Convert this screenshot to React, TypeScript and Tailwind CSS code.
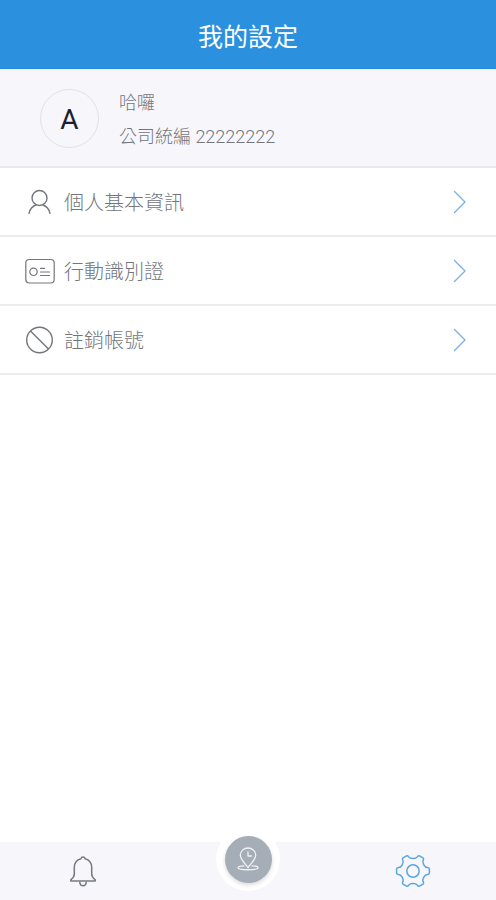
import type { ReactNode } from "react";

interface MenuItem {
  label: string;
  href: string;
  icon: ReactNode;
}

function PersonIcon() {
  return (
    <svg width="30" height="30" viewBox="0 0 30 30" fill="none" stroke="currentColor" strokeWidth="1.4" strokeLinecap="round" aria-hidden="true">
      <circle cx="14.5" cy="11" r="7.5" />
      <path d="M11 18C7.500 19.200 5 22 4 26.300M18 18C21.500 19.200 24 22 25 26.300" />
    </svg>
  );
}

function IdCardIcon() {
  return (
    <svg width="30" height="30" viewBox="0 0 30 30" fill="none" stroke="currentColor" strokeWidth="1.2" strokeLinecap="round" aria-hidden="true">
      <rect x="0.800" y="3.500" width="28.400" height="23.500" rx="3.500" />
      <circle cx="8.500" cy="15.800" r="3.700" />
      <path d="M15.500 12.300h4M15.500 16h9M15.500 19.500h9" />
    </svg>
  );
}

function BanIcon() {
  return (
    <svg width="30" height="30" viewBox="0 0 30 30" fill="none" stroke="currentColor" strokeWidth="1.4" aria-hidden="true">
      <circle cx="14.500" cy="15" r="12.800" />
      <path d="M5.500 6L23.500 24" />
    </svg>
  );
}

function ChevronIcon() {
  return (
    <svg width="14" height="24" viewBox="0 0 14 24" fill="none" stroke="#7db0e6" strokeWidth="1.4" strokeLinecap="round" strokeLinejoin="round" aria-hidden="true">
      <path d="M2.500 1.500L13 12L2.500 22.500" />
    </svg>
  );
}

function BellIcon() {
  return (
    <svg width="28" height="32" viewBox="0 0 28 32" fill="none" stroke="#75797f" strokeWidth="1.500" strokeLinecap="round" strokeLinejoin="round" aria-hidden="true">
      <path d="M14 2C12.800 2 12.200 2.800 12 3.700C8 4.700 5.300 8 5.300 12.500V19C5.300 21.500 4 23 1.800 24.800V26H26.200V24.800C24 23 22.700 21.500 22.700 19V12.500C22.700 8 20 4.700 16 3.700C15.800 2.800 15.200 2 14 2Z" />
      <path d="M10.800 27.500C11.300 31.800 16.700 31.800 17.200 27.500" />
    </svg>
  );
}

function GearIcon() {
  return (
    <svg width="36" height="36" viewBox="-18 -18 36 36" fill="none" stroke="#5ba6e0" strokeWidth="1.500" strokeLinejoin="round" aria-hidden="true">
      <path d="M-6.400 -15.200Q-5 -15.600 -4.300 -14.200C-2.800 -11.900 2.800 -11.900 4.300 -14.200Q5 -15.600 6.400 -15.200L10 -13.100Q11.100 -12.100 10.200 -10.800C8.900 -8.400 11.700 -3.500 14.400 -3.400Q16 -3.500 16.400 -2.100L16.400 2.100Q16 3.500 14.400 3.400C11.700 3.500 8.900 8.400 10.200 10.800Q11.100 12.100 10 13.100L6.400 15.200Q5 15.600 4.300 14.200C2.800 11.900 -2.800 11.900 -4.300 14.200Q-5 15.600 -6.400 15.200L-10 13.100Q-11.100 12.100 -10.200 10.800C-8.900 8.400 -11.700 3.500 -14.400 3.400Q-16 3.500 -16.400 2.100L-16.400 -2.100Q-16 -3.500 -14.400 -3.400C-11.700 -3.500 -8.900 -8.400 -10.200 -10.800Q-11.100 -12.100 -10 -13.100Z" />
      <circle r="6.200" />
    </svg>
  );
}

function CheckInIcon() {
  return (
    <svg width="22" height="24" viewBox="0 0 22 24" fill="none" stroke="#f1f3f5" strokeWidth="1.300" strokeLinecap="round" strokeLinejoin="round" aria-hidden="true">
      <path d="M11 20.500C8 16.500 3.300 12.500 3.300 8.300A7.700 7.300 0 0 1 18.700 8.300C18.700 12.500 14 16.500 11 20.500Z" />
      <path d="M11 5V9H14.500" />
      <path d="M7 18.800C3.500 18.900 1 19.600 1 20.800C1 23.400 21 23.400 21 20.800C21 19.600 18.500 18.900 15 18.800" />
    </svg>
  );
}

const menuItems: MenuItem[] = [
  { label: "個人基本資訊", href: "#profile", icon: <PersonIcon /> },
  { label: "行動識別證", href: "#badge", icon: <IdCardIcon /> },
  { label: "註銷帳號", href: "#delete", icon: <BanIcon /> },
];

export default function App() {
  return (
    <div className="flex min-h-screen flex-col bg-white font-[Roboto,'Noto_Sans_CJK_TC',sans-serif] font-light text-[#72767c]">
      <header className="flex h-[69px] items-center justify-center border-b border-[#2389d2] bg-[#2b91df] pt-2">
        <h1 className="text-[25px] leading-8 font-normal text-white">我的設定</h1>
      </header>

      <section className="flex h-[99px] items-center gap-5 border-b-2 border-[#e9e9ed] bg-[#f6f6fb] pt-0.5 pl-10">
        <div className="flex size-[59px] items-center justify-center rounded-full border border-[#e2e2e6] pt-0.5 text-[28px] font-normal text-[#1d2030]">
          A
        </div>
        <div className="pt-0.5 text-lg leading-[34px]">
          <p>哈囉</p>
          <p>公司統編 22222222</p>
        </div>
      </section>

      <nav>
        <ul>
          {menuItems.map((item) => (
            <li key={item.href}>
              <a href={item.href} className="flex h-[69px] items-center border-b-2 border-[#ececef] pr-[30px] pl-[25px]">
                {item.icon}
                <span className="ml-[9px] flex-1 pt-0.5 text-xl">{item.label}</span>
                <ChevronIcon />
              </a>
            </li>
          ))}
        </ul>
      </nav>

      {/* Bottom tab bar */}
      <nav className="relative mt-auto grid h-[58px] grid-cols-3 bg-[#f6f6fb]">
        <button type="button" aria-label="通知" className="flex items-center justify-center">
          <BellIcon />
        </button>
        <button type="button" aria-label="打卡" className="absolute -top-[15px] left-1/2 flex size-16 -translate-x-1/2 items-center justify-center rounded-full bg-white">
          <span className="flex size-[47px] items-center justify-center rounded-full bg-[#a5adb6] shadow-[0_2px_4px_rgba(0,0,0,0.15)]">
            <CheckInIcon />
          </span>
        </button>
        <button type="button" aria-label="設定" className="col-start-3 flex items-center justify-center">
          <GearIcon />
        </button>
      </nav>
    </div>
  );
}
